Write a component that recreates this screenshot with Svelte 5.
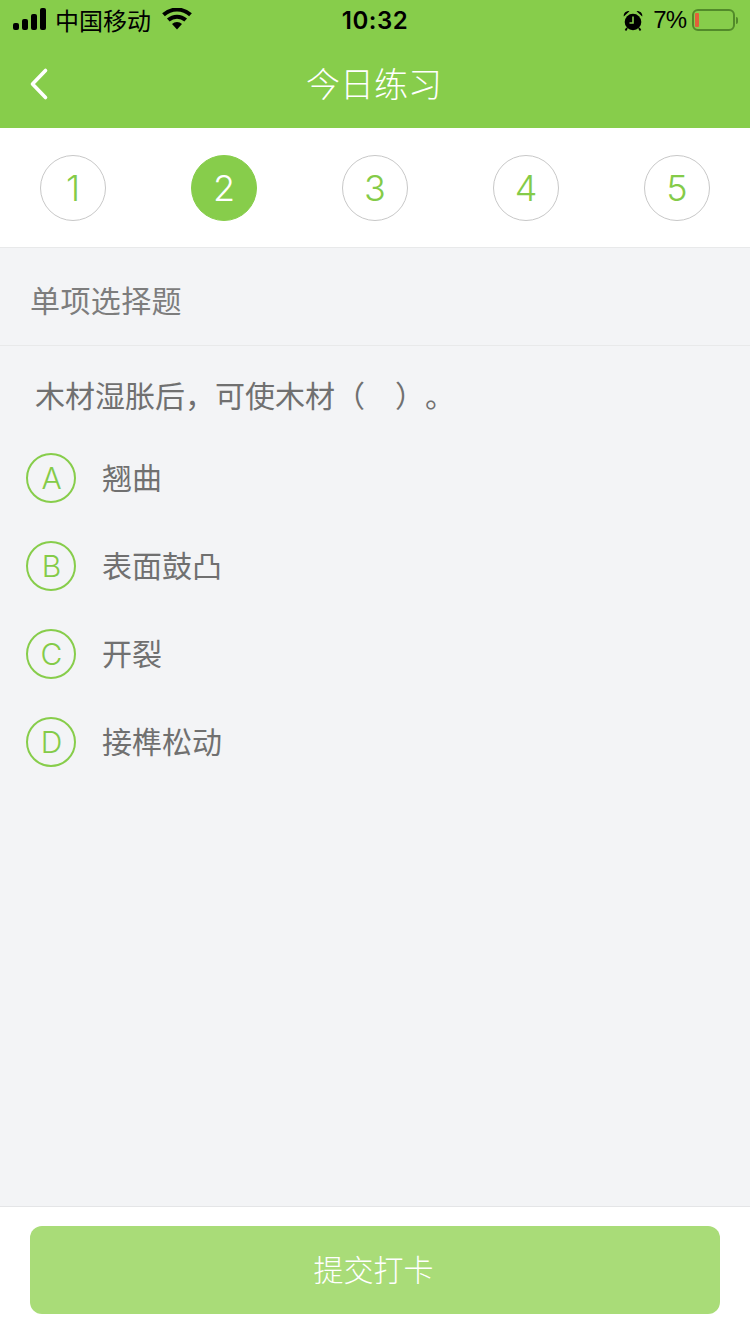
<script>
  const steps = [1, 2, 3, 4, 5];
  const options = [
    { key: 'A', text: '翘曲' },
    { key: 'B', text: '表面鼓凸' },
    { key: 'C', text: '开裂' },
    { key: 'D', text: '接榫松动' }
  ];
</script>

<div class="page">
  <header class="head">
    <div class="status">
      <div class="st-left">
        <svg class="signal" width="34" height="22" viewBox="0 0 34 22" aria-hidden="true">
          <rect x="0" y="15" width="6" height="7" rx="2" />
          <rect x="9" y="11" width="6" height="11" rx="2" />
          <rect x="18" y="6" width="6" height="16" rx="2" />
          <rect x="27" y="0" width="6" height="22" rx="2" />
        </svg>
        <span class="carrier">中国移动</span>
        <svg class="wifi" width="30" height="22" viewBox="0 0 30 22" aria-hidden="true">
          <path d="M15 21.500 10 16a7.500 7.500 0 0 1 10 0Z" />
          <path d="M1.500 6.800a20 20 0 0 1 27 0" fill="none" stroke="#000" stroke-width="4" />
          <path d="M6.300 12a13 13 0 0 1 17.400 0" fill="none" stroke="#000" stroke-width="4" />
        </svg>
      </div>
      <span class="time">10:32</span>
      <div class="st-right">
        <svg class="alarm" width="20" height="22" viewBox="0 0 20 22" aria-hidden="true">
          <circle cx="10" cy="12" r="8.300" />
          <path d="M.8 6.500A4.500 4.500 0 0 1 6.500 1.300ZM19.200 6.500A4.500 4.500 0 0 0 13.500 1.300Z" />
          <path d="M4 18 2.500 20.500M16 18 17.500 20.500" stroke="#000" stroke-width="1.800" />
          <path d="M10 6.500V13H6.500" fill="none" stroke="#87cd4b" stroke-width="1.600" />
        </svg>
        <span class="pct">7%</span>
        <div class="battery"><div class="level"></div></div>
        <div class="nub"></div>
      </div>
    </div>
    <div class="nav">
      <svg class="back" width="20" height="34" viewBox="0 0 20 34" aria-hidden="true">
        <path d="M16.500 3.500 3.500 17l13 13.500" fill="none" stroke="#fff" stroke-width="3.600" stroke-linecap="round" stroke-linejoin="round" />
      </svg>
      <h1>今日练习</h1>
    </div>
  </header>

  <nav class="steps">
    {#each steps as s}
      <div class="step" class:on={s === 2}>{s}</div>
    {/each}
  </nav>

  <main class="body">
    <div class="kind">单项选择题</div>
    <p class="question">木材湿胀后，可使木材（<span class="blank"></span>）。</p>
    <ul class="options">
      {#each options as o}
        <li class="option">
          <span class="badge">{o.key}</span>
          <span class="label">{o.text}</span>
        </li>
      {/each}
    </ul>
  </main>

  <footer class="foot">
    <button class="submit">提交打卡</button>
  </footer>
</div>

<style>
  :global(body) {
    margin: 0;
  }
  .page {
    width: 750px;
    height: 1334px;
    display: flex;
    flex-direction: column;
    background: #f3f4f6;
    font-family: "Liberation Sans", "Noto Sans CJK SC", sans-serif;
    overflow: hidden;
  }
  .head {
    height: 128px;
    background: #87cd4b;
    flex: none;
  }
  .status {
    height: 40px;
    padding: 0 12px 0 13px;
    display: flex;
    align-items: center;
    position: relative;
    color: #000;
  }
  .st-left {
    display: flex;
    align-items: center;
    flex: 1;
  }
  .signal {
    margin-top: -2px;
  }
  .signal rect, .wifi path:first-child, .alarm circle, .alarm > path:nth-child(2) {
    fill: #000;
  }
  .carrier {
    margin-left: 8px;
    margin-top: -1px;
    font-size: 24px;
    font-family: "Noto Sans CJK SC", sans-serif;
    line-height: 40px;
  }
  .wifi {
    margin-left: 11px;
    margin-top: -2px;
  }
  .time {
    position: absolute;
    left: 0;
    right: 0;
    text-align: center;
    font-size: 24px;
    font-weight: 600;
    font-family: Inter, "Liberation Sans", sans-serif;
    letter-spacing: 0.500px;
  }
  .st-right {
    display: flex;
    align-items: center;
  }
  .alarm {
    margin-top: 1px;
  }
  .pct {
    margin-left: 10px;
    font-size: 24px;
    letter-spacing: -1px;
    font-family: "Liberation Sans", sans-serif;
  }
  .battery {
    box-sizing: border-box;
    width: 43px;
    height: 22px;
    margin-left: 6px;
    border: 2px solid #528a2a;
    border-radius: 6px;
    padding: 2px 1px;
    display: flex;
  }
  .level {
    width: 4px;
    background: #e2603a;
    border-radius: 1px;
  }
  .nub {
    width: 2px;
    height: 7px;
    margin-left: 1px;
    background: #528a2a;
    border-radius: 0 2px 2px 0;
  }
  .nav {
    height: 88px;
    position: relative;
    display: flex;
    align-items: center;
    justify-content: center;
  }
  .back {
    position: absolute;
    left: 29px;
    top: 27px;
  }
  h1 {
    margin: 0 2px 4px 0;
    color: #fff;
    font-size: 34px;
    font-weight: 300;
    font-family: "Noto Sans CJK SC", sans-serif;
  }
  .steps {
    flex: none;
    box-sizing: border-box;
    height: 120px;
    background: #fff;
    border-bottom: 1px solid #e8e9ea;
    padding: 27px 40px 0;
    display: flex;
    justify-content: space-between;
    align-items: flex-start;
  }
  .step {
    box-sizing: border-box;
    width: 66px;
    height: 66px;
    border: 1px solid #c8c8c8;
    border-radius: 50%;
    display: flex;
    align-items: center;
    justify-content: center;
    color: #84cb48;
    font-size: 36px;
    font-family: Inter, Roboto, sans-serif;
    font-weight: 300;
  }
  .step.on {
    background: #87cd4b;
    border-color: #87cd4b;
    color: #fff;
  }
  .body {
    flex: 1;
    color: #707070;
    font-family: "Noto Sans CJK SC", sans-serif;
  }
  .kind {
    box-sizing: border-box;
    height: 98px;
    padding: 4px 30px 0;
    display: flex;
    align-items: center;
    border-bottom: 1px solid #e8e9ea;
    font-size: 30px;
    letter-spacing: 0.400px;
    color: #7d7d7d;
  }
  .question {
    margin: 0;
    padding: 24px 35px 0;
    font-size: 30px;
    line-height: 48px;
    text-spacing-trim: space-all;
  }
  .blank {
    display: inline-block;
    width: 30px;
  }
  .options {
    list-style: none;
    margin: 0;
    padding: 35px 0 0 26px;
    display: flex;
    flex-direction: column;
    gap: 38px;
  }
  .option {
    display: flex;
    align-items: center;
    height: 50px;
  }
  .badge {
    box-sizing: border-box;
    width: 50px;
    height: 50px;
    padding-left: 1px;
    border: 2px solid #87cd4b;
    border-radius: 50%;
    display: flex;
    align-items: center;
    justify-content: center;
    color: #84cb48;
    font-size: 30px;
    font-family: Inter, Roboto, sans-serif;
    font-weight: 350;
  }
  .label {
    margin: 0 0 4px 26px;
    font-size: 30px;
  }
  .foot {
    flex: none;
    box-sizing: border-box;
    height: 128px;
    background: #fff;
    border-top: 1px solid #e4e5e7;
    padding: 19px 30px 0;
  }
  .submit {
    width: 100%;
    height: 88px;
    border: 0;
    border-radius: 12px;
    background: #a9dc78;
    color: #fff;
    font-size: 30px;
    font-family: "Noto Sans CJK SC", sans-serif;
    font-weight: 300;
    padding: 0 3px 4px 0;
  }
</style>
